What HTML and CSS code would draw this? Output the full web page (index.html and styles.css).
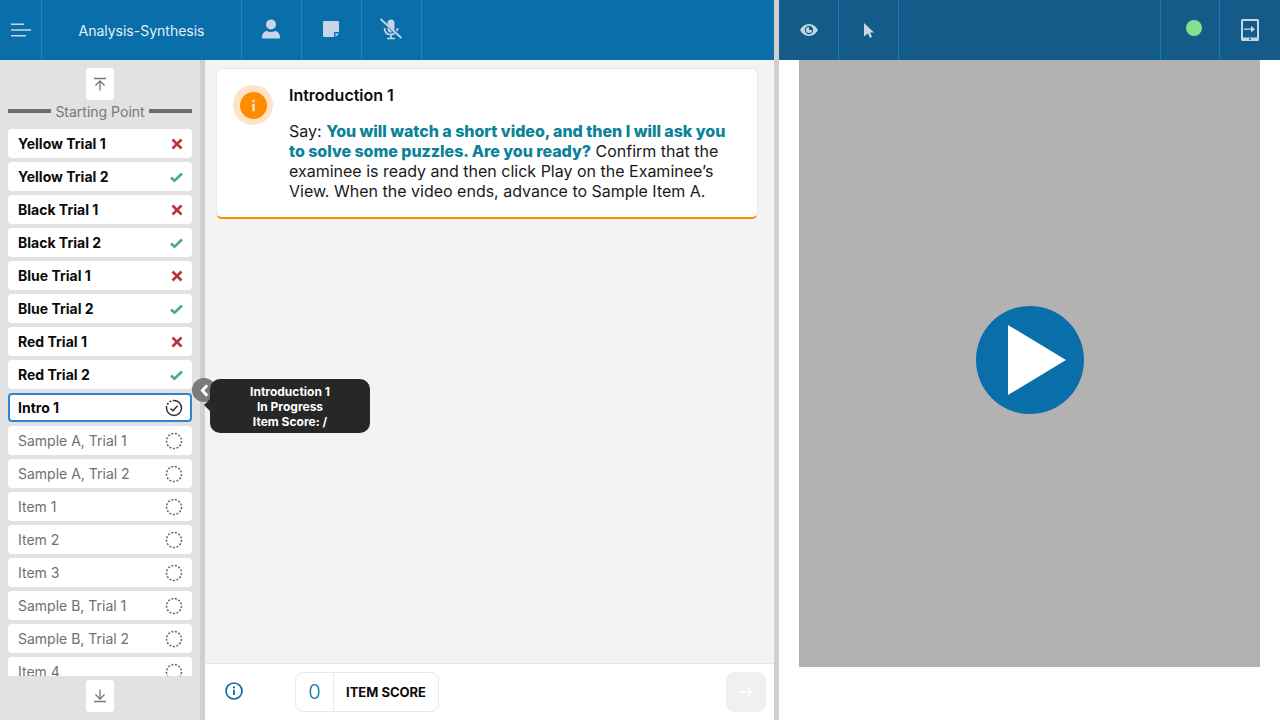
FILE: index.html
```html
<!DOCTYPE html>
<html lang="en">
<head>
<meta charset="utf-8">
<title>Analysis-Synthesis</title>
<link rel="stylesheet" href="styles.css">
</head>
<body>
<div class="app">
  <section class="pane-left">
    <header class="bar bar-left">
      <div class="cell cell-menu"><svg class="ico" viewBox="0 0 21 14" width="21" height="14"><path d="M1 1.200h13M1 7h20M1 12.800h15" stroke="currentColor" stroke-width="1.600" fill="none"/></svg></div>
      <div class="cell cell-title">Analysis-Synthesis</div>
      <div class="cell cell-icon"><svg class="ico shift" viewBox="0 0 20 20" width="20" height="20"><circle cx="10" cy="5.500" r="5"/><path d="M1 18.500c0-4.500 3-6.500 5-6.500 1.200.6 2.600 1 4 1s2.800-.4 4-1c2 0 5 2 5 6.500 0 .6-.4 1-1 1H2c-.6 0-1-.4-1-1z"/></svg></div>
      <div class="cell cell-icon"><svg class="ico shift" viewBox="0 0 16 16" width="16" height="16"><path d="M1 0h14a1 1 0 0 1 1 1v10h-4a1 1 0 0 0-1 1v4H1a1 1 0 0 1-1-1V1a1 1 0 0 1 1-1z"/><path d="M12.500 12.500H16L12.500 16z"/></svg></div>
      <div class="cell cell-icon"><svg class="ico shift" viewBox="0 0 24 22" width="24" height="22"><path d="M8.500 6V5a3.500 3.500 0 0 1 7 0v5.500a3 3 0 0 1-.5 1.700zM8.500 9.200l5 5a3.500 3.500 0 0 1-5-3z"/><path d="M5.500 10c0 4 2.500 6.500 6.500 6.500 1.400 0 2.600-.3 3.600-.9M18.500 10c0 1.200-.2 2.200-.6 3.100M12 16.500V20M8 20.500h8M1.500 1l21 19" fill="none" stroke="currentColor" stroke-width="1.700"/></svg></div>
    </header>
    <div class="body-left">
      <aside class="sidebar">
        <button class="scroll-btn" type="button"><svg viewBox="0 0 14 14" width="14" height="14"><path d="M1 1.500h12M7 13.500V4M2.500 8.500 7 4l4.500 4.500" fill="none" stroke="#777" stroke-width="1.300"/></svg></button>
        <div class="start-label"><span class="rule"></span><span>Starting Point</span><span class="rule"></span></div>
        <div class="list-clip">
          <ul class="list">
            <li class="row done">Yellow Trial 1<svg class="mark" viewBox="0 0 12 12" width="12" height="12"><path d="M1.500 1.500l9 9M10.500 1.500l-9 9" stroke="#b8323a" stroke-width="2.600" fill="none"/></svg></li>
            <li class="row done">Yellow Trial 2<svg class="mark" viewBox="0 0 13 10" width="13" height="10"><path d="M1 5.500l3.500 3.200L12 1.500" stroke="#45ad80" stroke-width="2.600" fill="none"/></svg></li>
            <li class="row done">Black Trial 1<svg class="mark" viewBox="0 0 12 12" width="12" height="12"><path d="M1.500 1.500l9 9M10.500 1.500l-9 9" stroke="#b8323a" stroke-width="2.600" fill="none"/></svg></li>
            <li class="row done">Black Trial 2<svg class="mark" viewBox="0 0 13 10" width="13" height="10"><path d="M1 5.500l3.500 3.200L12 1.500" stroke="#45ad80" stroke-width="2.600" fill="none"/></svg></li>
            <li class="row done">Blue Trial 1<svg class="mark" viewBox="0 0 12 12" width="12" height="12"><path d="M1.500 1.500l9 9M10.500 1.500l-9 9" stroke="#b8323a" stroke-width="2.600" fill="none"/></svg></li>
            <li class="row done">Blue Trial 2<svg class="mark" viewBox="0 0 13 10" width="13" height="10"><path d="M1 5.500l3.500 3.200L12 1.500" stroke="#45ad80" stroke-width="2.600" fill="none"/></svg></li>
            <li class="row done">Red Trial 1<svg class="mark" viewBox="0 0 12 12" width="12" height="12"><path d="M1.500 1.500l9 9M10.500 1.500l-9 9" stroke="#b8323a" stroke-width="2.600" fill="none"/></svg></li>
            <li class="row done">Red Trial 2<svg class="mark" viewBox="0 0 13 10" width="13" height="10"><path d="M1 5.500l3.500 3.200L12 1.500" stroke="#45ad80" stroke-width="2.600" fill="none"/></svg></li>
            <li class="row current">Intro 1<svg class="ring" viewBox="0 0 18 18" width="18" height="18"><path d="M9 1.500a7.500 7.500 0 1 1-7.500 7.500" fill="none" stroke="#333" stroke-width="1.500"/><path d="M1.500 9a7.500 7.500 0 0 1 7.500-7.500" fill="none" stroke="#333" stroke-width="1.500" stroke-dasharray="2 1.500"/><path d="M5.500 9.500l2.500 2.300 4.500-5" fill="none" stroke="#333" stroke-width="1.500"/></svg></li>
            <li class="row">Sample A, Trial 1<svg class="ring" viewBox="0 0 18 18" width="18" height="18"><circle cx="9" cy="9" r="7.500" fill="none" stroke="#666" stroke-width="1.500" stroke-dasharray="2 1.600"/></svg></li>
            <li class="row">Sample A, Trial 2<svg class="ring" viewBox="0 0 18 18" width="18" height="18"><circle cx="9" cy="9" r="7.500" fill="none" stroke="#666" stroke-width="1.500" stroke-dasharray="2 1.600"/></svg></li>
            <li class="row">Item 1<svg class="ring" viewBox="0 0 18 18" width="18" height="18"><circle cx="9" cy="9" r="7.500" fill="none" stroke="#666" stroke-width="1.500" stroke-dasharray="2 1.600"/></svg></li>
            <li class="row">Item 2<svg class="ring" viewBox="0 0 18 18" width="18" height="18"><circle cx="9" cy="9" r="7.500" fill="none" stroke="#666" stroke-width="1.500" stroke-dasharray="2 1.600"/></svg></li>
            <li class="row">Item 3<svg class="ring" viewBox="0 0 18 18" width="18" height="18"><circle cx="9" cy="9" r="7.500" fill="none" stroke="#666" stroke-width="1.500" stroke-dasharray="2 1.600"/></svg></li>
            <li class="row">Sample B, Trial 1<svg class="ring" viewBox="0 0 18 18" width="18" height="18"><circle cx="9" cy="9" r="7.500" fill="none" stroke="#666" stroke-width="1.500" stroke-dasharray="2 1.600"/></svg></li>
            <li class="row">Sample B, Trial 2<svg class="ring" viewBox="0 0 18 18" width="18" height="18"><circle cx="9" cy="9" r="7.500" fill="none" stroke="#666" stroke-width="1.500" stroke-dasharray="2 1.600"/></svg></li>
            <li class="row">Item 4<svg class="ring" viewBox="0 0 18 18" width="18" height="18"><circle cx="9" cy="9" r="7.500" fill="none" stroke="#666" stroke-width="1.500" stroke-dasharray="2 1.600"/></svg></li>
          </ul>
        </div>
        <button class="scroll-btn" type="button"><svg viewBox="0 0 14 14" width="14" height="14"><path d="M1 12.500h12M7 .5V10M2.500 5.500 7 10l4.500-4.500" fill="none" stroke="#777" stroke-width="1.300"/></svg></button>
      </aside>
      <div class="splitter"></div>
      <main class="main">
        <div class="content">
          <article class="card">
            <div class="badge"><span class="badge-dot"><svg viewBox="0 0 6 14" width="5" height="13"><rect x="1.500" y="0" width="3" height="3" rx="1.200" fill="#ffe3c2"/><rect x="1.500" y="5" width="3" height="9" rx=".6" fill="#ffe3c2"/></svg></span></div>
            <div class="card-text">
              <h1 class="card-title">Introduction 1</h1>
              <p class="card-body">Say: <strong class="say">You will watch a short video, and then I will ask you to solve some puzzles. Are you ready?</strong> Confirm that the examinee is ready and then click Play on the Examinee’s View. When the video ends, advance to Sample Item A.</p>
            </div>
          </article>
        </div>
        <footer class="footer">
          <svg class="info" viewBox="0 0 18 18" width="18" height="18"><circle cx="9" cy="9" r="8" fill="none" stroke="#0a6eaa" stroke-width="1.700"/><circle cx="9" cy="5.400" r="1.100" fill="#0a6eaa"/><rect x="8.100" y="7.800" width="1.800" height="5.200" fill="#0a6eaa"/></svg>
          <div class="score"><span class="score-num">0</span><span class="score-label">ITEM SCORE</span></div>
          <button class="next" type="button"><svg viewBox="0 0 14 12" width="14" height="12"><path d="M0 6h13M8 1l5 5-5 5" fill="none" stroke="#fff" stroke-width="1.600"/></svg></button>
        </footer>
      </main>
    </div>
  </section>
  <div class="divider"></div>
  <section class="pane-right">
    <header class="bar bar-right">
      <div class="cell cell-icon cell-r"><svg class="ico" viewBox="0 0 18 12" width="18" height="12"><path fill-rule="evenodd" d="M9 0c4 0 7.300 3 9 6-1.700 3-5 6-9 6s-7.300-3-9-6c1.700-3 5-6 9-6zm0 1.800a4.200 4.200 0 1 0 0 8.400 4.200 4.200 0 0 0 0-8.400z"/><path d="M9 3a3 3 0 1 0 3 3H9z"/></svg></div>
      <div class="cell cell-icon cell-r cell-w60"><svg class="ico" viewBox="0 0 10 15" width="10" height="15"><path d="M0 0l10 9.500H6.200L8 13.800 6 15l-2-4.500L0 13.500z"/></svg></div>
      <div class="bar-spacer"></div>
      <div class="cell cell-icon cell-r cell-l"><span class="status"></span></div>
      <div class="cell cell-icon cell-r cell-none"><svg class="ico" viewBox="0 0 18 22" width="18" height="22"><path fill-rule="evenodd" d="M1.500 0h15A1.500 1.500 0 0 1 18 1.500v19a1.500 1.500 0 0 1-1.500 1.500h-15A1.500 1.500 0 0 1 0 20.500v-19A1.500 1.500 0 0 1 1.500 0zM2 2v16.500h14V2z"/><circle cx="9" cy="20.300" r="1" fill="#135c8a"/><path d="M10 6.800l4 3.400-4 3.400z"/><path d="M3 10.200h8" stroke="currentColor" stroke-width="1.300"/></svg></div>
    </header>
    <div class="stage">
      <div class="video">
        <svg class="play" viewBox="0 0 108 108" width="108" height="108"><circle cx="54" cy="54" r="54" fill="#0a6eaa"/><path d="M32 19l58 35-58 35z" fill="#fff"/></svg>
      </div>
    </div>
  </section>
</div>
<div class="handle"><svg viewBox="0 0 8 12" width="9" height="13"><path d="M6.500 1.200 2 6l4.500 4.800" fill="none" stroke="#fff" stroke-width="2.600"/></svg></div>
<div class="tooltip">Introduction 1<br>In Progress<br>Item Score: /</div>
</body>
</html>
```
FILE: styles.css
```css
* { box-sizing: border-box; }
html, body { margin: 0; height: 720px; overflow: hidden; }
body { font-family: Inter, "Liberation Sans", sans-serif; color: #111; background: #fff; }
.app { display: flex; width: 1280px; height: 720px; }
.pane-left { width: 774px; display: flex; flex-direction: column; }
.divider { width: 5px; background: #d0d0d0; }
.pane-right { flex: 1; display: flex; flex-direction: column; }
.bar { height: 60px; display: flex; flex: none; color: #c6d6e4; }
.bar-left { background: #0a6eaa; }
.bar-right { background: #135c8a; }
.cell { display: flex; align-items: center; justify-content: center; border-right: 1px solid #2b80b8; height: 60px; }
.cell-menu { width: 42px; }
.cell-title { width: 200px; font-size: 14px; font-weight: 400; color: #e4eef5; }
.cell-icon { width: 60px; }
.shift { transform: translate(-1px, -1px); }
.cell-r { border-right-color: #2177ae; }
.cell-w60 { width: 60px; }
.cell-l { width: 59px; padding-left: 8px; }
.cell-none { border-right: 0; }
.bar-spacer { flex: 1; border-right: 1px solid #2177ae; }
.ico { fill: currentColor; display: block; }
.status { width: 16px; height: 16px; border-radius: 50%; background: #86e08f; margin-top: -4px; }
.body-left { flex: 1; display: flex; min-height: 0; }
.sidebar { width: 200px; background: #e2e2e2; display: flex; flex-direction: column; align-items: center; padding: 8px 8px; }
.scroll-btn { width: 28px; height: 32px; flex: none; border: 0; padding: 0; background: #fff; border-radius: 3px; display: flex; align-items: center; justify-content: center; }
.start-label { width: 184px; height: 22px; margin-bottom: 7px; flex: none; display: flex; align-items: center; justify-content: center; gap: 4px; font-size: 14px; color: #777; }
.rule { flex: 1; height: 4px; background: #6c6e6c; }
.list-clip { width: 184px; height: 547px; flex: none; overflow: hidden; margin-bottom: 4px; }
.list { list-style: none; margin: 0; padding: 0; display: flex; flex-direction: column; gap: 4px; }
.row { height: 29px; flex: none; background: #fff; border-radius: 4px; display: flex; align-items: center; justify-content: space-between; padding: 0 9px 0 10px; font-size: 14px; color: #707070; }
.done, .current { color: #0b0b0b; font-weight: 700; }
.current { border: 2px solid #2a86d0; padding: 0 7px 0 8px; }
.splitter { width: 5px; background: #d0d0d0; }
.main { flex: 1; display: flex; flex-direction: column; background: #f3f3f3; min-width: 0; }
.content { flex: 1; padding: 8px 16px 0 11px; }
.card { height: 151px; background: #fff; border: 1px solid #e6e8ee; border-bottom: 2px solid #ff8b00; border-radius: 6px; padding: 16px 16px 0 16px; display: flex; gap: 16px; }
.badge { width: 40px; height: 40px; flex: none; border-radius: 50%; background: #ffe3c6; display: flex; align-items: center; justify-content: center; }
.badge-dot { width: 27px; height: 27px; border-radius: 50%; background: #ff8b00; display: flex; align-items: center; justify-content: center; }
.card-text { flex: 1; min-width: 0; }
.card-title { margin: 0 0 16px; font-size: 16px; line-height: 20px; font-weight: 600; color: #0c0c0c; }
.card-body { margin: 0; font-size: 16px; line-height: 20px; color: #1a1a1a; }
.say { color: #0b8298; font-weight: 800; letter-spacing: -.04px; }
.footer { height: 57px; flex: none; background: #fff; border-top: 1px solid #e4e6ea; display: flex; align-items: center; padding: 0 8px 0 20px; }
.info { flex: none; margin-top: -3px; }
.score { display: flex; margin-left: 52px; height: 40px; border: 1px solid #e4e8f0; border-radius: 8px; align-items: stretch; }
.score-num { width: 38px; display: flex; align-items: center; justify-content: center; font-size: 20px; font-weight: 300; color: #0a6eaa; border-right: 1px solid #e4e8f0; }
.score-label { padding: 0 12px; display: flex; align-items: center; font-size: 13px; font-weight: 700; color: #0b0b0b; }
.next { margin-left: auto; width: 40px; height: 40px; border: 0; padding: 0; border-radius: 8px; background: #f0f0f0; display: flex; align-items: center; justify-content: center; }
.stage { flex: 1; display: flex; justify-content: center; }
.video { width: 461px; height: 607px; padding-bottom: 7px; background: #b2b2b2; display: flex; align-items: center; justify-content: center; }
.play { display: block; }
.handle { position: absolute; left: 192px; top: 378px; width: 24px; height: 24px; border-radius: 50%; background: #7a7a7a; display: flex; align-items: center; justify-content: center; }
.tooltip { position: absolute; left: 210px; top: 379px; width: 160px; height: 54px; background: #272727; color: #fff; border-radius: 10px; font-size: 12px; line-height: 15px; font-weight: 700; text-align: center; padding-top: 5px; }
.tooltip::before { content: ""; position: absolute; left: -6px; top: 20px; border-style: solid; border-width: 6px 6px 6px 0; border-color: transparent #272727 transparent transparent; }
```
